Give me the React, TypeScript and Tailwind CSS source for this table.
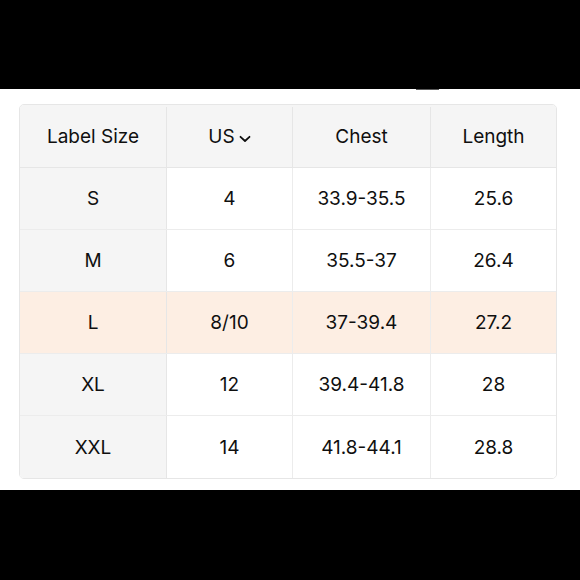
import React from "react";

const rows = [
  { label: "S", us: "4", chest: "33.9-35.5", length: "25.6" },
  { label: "M", us: "6", chest: "35.5-37", length: "26.4" },
  { label: "L", us: "8/10", chest: "37-39.4", length: "27.2", hl: true },
  { label: "XL", us: "12", chest: "39.4-41.8", length: "28" },
  { label: "XXL", us: "14", chest: "41.8-44.1", length: "28.8" },
];

export default function App() {
  return (
    <div className="w-[580px] h-[580px] bg-black flex flex-col" style={{ fontFamily: "Inter, 'Noto Sans', sans-serif" }}>
      <div className="h-[89px] shrink-0" />
      <div className="h-[401px] bg-white shrink-0 relative pt-[15px] pl-[19px] pr-[23px]">
        <div className="absolute left-[416px] top-0 w-[23px] h-[1px] bg-[#5a5a5a]" />
        <div className="border border-[#e6e6e6] rounded-[5px] overflow-hidden text-[19px] text-[#0f0f0f]">
          <div className="grid grid-cols-[147px_126px_138px_1fr] h-[63px] bg-[#f5f5f5] border-b border-[#e6e6e6] pt-[2px]">
            <div className="flex items-center justify-center border-r border-[#e6e6e6]">Label Size</div>
            <div className="flex items-center justify-center border-r border-[#e6e6e6] gap-[4px]">
              <span>US</span>
              <svg width="12" height="8" viewBox="0 0 12 8" className="mt-[3px]">
                <path d="M1.5 1.8 L6 6 L10.5 1.8" fill="none" stroke="#0f0f0f" strokeWidth="1.8" strokeLinecap="round" strokeLinejoin="round" />
              </svg>
            </div>
            <div className="flex items-center justify-center border-r border-[#e6e6e6]">Chest</div>
            <div className="flex items-center justify-center">Length</div>
          </div>
          {rows.map((r, i) => (
            <div
              key={r.label}
              className={`grid grid-cols-[147px_126px_138px_1fr] h-[62px] ${i < rows.length - 1 ? "border-b border-[#ececec]" : ""} ${r.hl ? "bg-[#fdeee3]" : "bg-white"}`}
            >
              <div className={`flex items-center justify-center border-r border-[#e6e6e6] pt-[2px] ${r.hl ? "" : "bg-[#f5f5f5]"}`}>{r.label}</div>
              <div className="flex items-center justify-center border-r border-[#ececec] pt-[2px]">{r.us}</div>
              <div className="flex items-center justify-center border-r border-[#ececec] pt-[2px]">{r.chest}</div>
              <div className="flex items-center justify-center pt-[2px]">{r.length}</div>
            </div>
          ))}
        </div>
      </div>
      <div className="flex-1" />
    </div>
  );
}
